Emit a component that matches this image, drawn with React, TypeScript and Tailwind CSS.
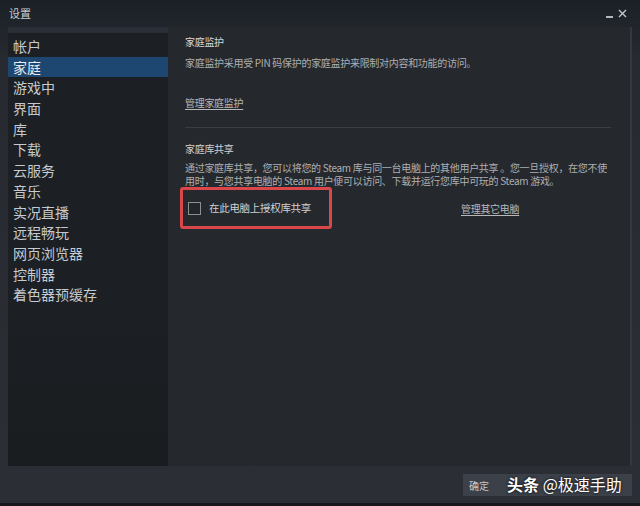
const navItems = [
  "帐户",
  "家庭",
  "游戏中",
  "界面",
  "库",
  "下载",
  "云服务",
  "音乐",
  "实况直播",
  "远程畅玩",
  "网页浏览器",
  "控制器",
  "着色器预缓存",
];

const font = { fontFamily: '"Noto Sans CJK SC", "Noto Sans", sans-serif' };

export default function App() {
  return (
    <div
      className="w-[640px] h-[506px] flex flex-col bg-gradient-to-b from-[#1b2027] via-[#272a30] via-[60px] to-[#2b2e34] text-[#c6c8cb] overflow-hidden border-b-[3px] border-[#16181b]"
      style={font}
    >
      {/* title bar */}
      <div className="h-[27px] flex items-center justify-between pl-[9px] pr-[13px] shrink-0">
        <span className="text-[11px] text-[#c9cbce]">设置</span>
        <div className="flex items-center gap-[5px]">
          <span className="block w-[7px] h-[2px] bg-[#b4b8bd] mt-[6px]" />
          <svg width="9" height="9" viewBox="0 0 9 9">
            <path d="M1 1 L8 8 M8 1 L1 8" stroke="#c2c5c9" strokeWidth="1.4" />
          </svg>
        </div>
      </div>

      <div className="flex flex-1 min-h-0 pl-[8px] pr-[8px]">
        {/* sidebar */}
        <div className="w-[160px] flex flex-col bg-[#1c1f23] border-t-[6px] border-[#2a2f37]">
          <ul className="pt-[3px]">
            {navItems.map((item) => (
              <li
                key={item}
                className={
                  "h-[20.7px] leading-[20.7px] pl-[5px] text-[14px] " +
                  (item === "家庭"
                    ? "bg-[#1d4670] text-[#e8ecef]"
                    : "text-[#c4cad0]")
                }
              >
                {item}
              </li>
            ))}
          </ul>
          <div className="flex-1 bg-gradient-to-b from-[#1c1f23] to-[#1a1d20]" />
        </div>

        {/* content */}
        <div className="flex-1 bg-[#25282d] border-r-[2px] border-[#34373e] pl-[17px] pr-[19px] pt-[8px] text-[10px] tracking-[-0.3px]">
          <div className="text-[#d6d8da] leading-[14px]">家庭监护</div>
          <div className="mt-[7px] text-[#aeb0b2] leading-[14px]">
            家庭监护采用受 PIN 码保护的家庭监护来限制对内容和功能的访问。
          </div>
          <div className="mt-[26px] text-[#b6b8ba] underline underline-offset-2 leading-[14px]">
            管理家庭监护
          </div>
          <div className="mt-[17px] h-px bg-[#3b3e44]" />
          <div className="mt-[14px] text-[#d0d2d4] leading-[14px]">家庭库共享</div>
          <div className="mt-[5px] text-[#aeb0b2] leading-[13px] pr-[2px]">
            通过家庭库共享，您可以将您的 Steam 库与同一台电脑上的其他用户共享 。您一旦授权，在您不使用时，与您共享电脑的 Steam 用户便可以访问、下载并运行您库中可玩的 Steam 游戏。
          </div>
          <div className="flex items-center">
            <div className="-ml-[5px] w-[152px] h-[42px] border-[3px] border-[#d9474a] rounded-[3px] flex items-center pl-[5px]">
              <span className="w-[13px] h-[13px] border border-[#8c8f94] bg-[#222529]" />
              <span className="ml-[8px] text-[#cfd1d3] text-[10.5px]">在此电脑上授权库共享</span>
            </div>
            <span className="ml-[129px] text-[#b6b8ba] underline underline-offset-2">
              管理其它电脑
            </span>
          </div>
        </div>
      </div>

      {/* footer buttons */}
      <div className="h-[37px] shrink-0 flex items-start justify-end pr-[8px] pt-[8px]">
        <div className="w-[169px] h-[22px] bg-[#3b4049] flex items-center relative">
          <span className="ml-[6px] text-[10px] text-[#c8cbd0]">确定</span>
          <span className="absolute left-[44px] -top-[2px] whitespace-nowrap text-[16px] leading-[24px] font-bold text-white [text-shadow:0_0_3px_#000]">
            头条 <span className="font-normal">@极速手助</span>
          </span>
        </div>
      </div>
    </div>
  );
}
